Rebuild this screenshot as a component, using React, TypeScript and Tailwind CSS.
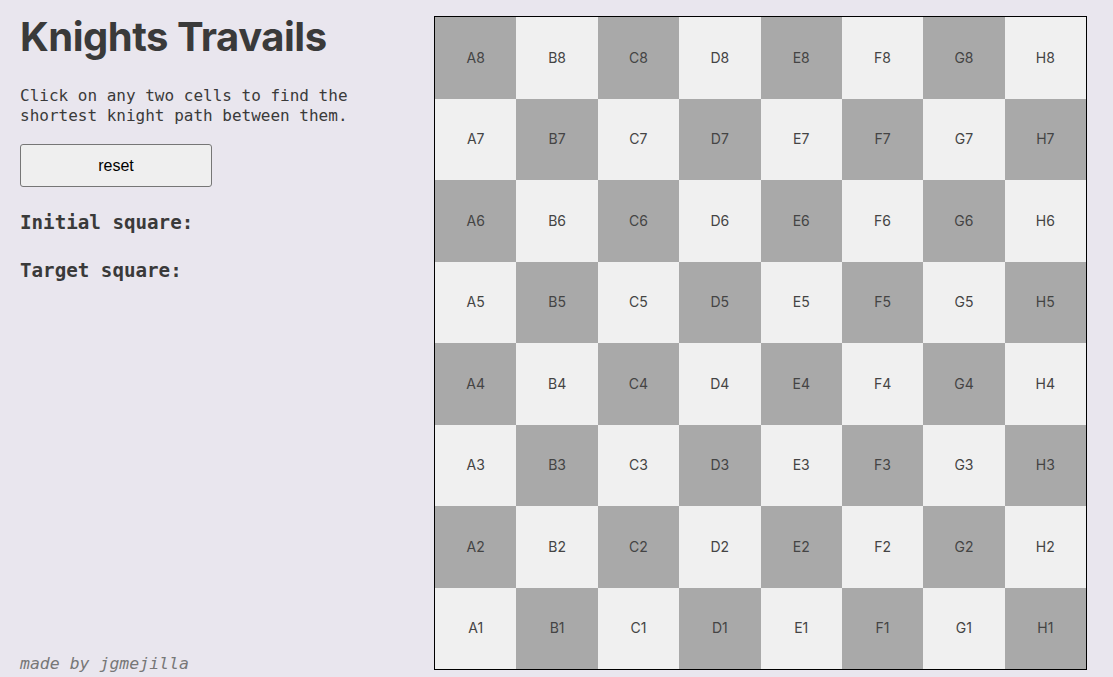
const files = ['A', 'B', 'C', 'D', 'E', 'F', 'G', 'H'];
const ranks = [8, 7, 6, 5, 4, 3, 2, 1];

function Board() {
  return (
    <div className="mt-4 grid h-[654px] w-[653px] grid-cols-8 grid-rows-8 border border-black">
      {ranks.map((rank, r) =>
        files.map((file, f) => {
          const dark = (r + f) % 2 === 0;
          return (
            <div
              key={file + rank}
              className={`flex items-center justify-center text-sm text-[#444] font-['Inter',sans-serif] ${
                dark ? 'bg-[#a9a9a9]' : 'bg-[#f0f0f0]'
              }`}
            >
              {file}
              {rank}
            </div>
          );
        }),
      )}
    </div>
  );
}

export default function App() {
  return (
    <div className="flex h-screen overflow-hidden bg-[#e9e6ee] text-[#3a3a3a]">
      <aside className="flex w-[434px] shrink-0 flex-col px-5 font-['DejaVu_Sans_Mono',monospace]">
        <h1 className="mt-[13px] font-['Inter',sans-serif] text-[40px] font-bold leading-[48px] tracking-[-0.5px]">
          Knights Travails
        </h1>
        <p className="mt-[25px] text-base leading-5">
          Click on any two cells to find the
          <br />
          shortest knight path between them.
        </p>
        <button className="mt-[18px] h-[43px] w-[192px] rounded-[3px] border border-[#767676] bg-[#efefef] font-['Liberation_Sans',sans-serif] text-base text-black">
          reset
        </button>
        <h2 className="mt-6 text-[19.2px] font-bold leading-6">Initial square:</h2>
        <h2 className="mt-6 text-[19.2px] font-bold leading-6">Target square:</h2>
        <footer className="mt-auto pb-[3px] text-[16.5px] italic leading-5 text-[#777]">made by jgmejilla</footer>
      </aside>
      <Board />
    </div>
  );
}
